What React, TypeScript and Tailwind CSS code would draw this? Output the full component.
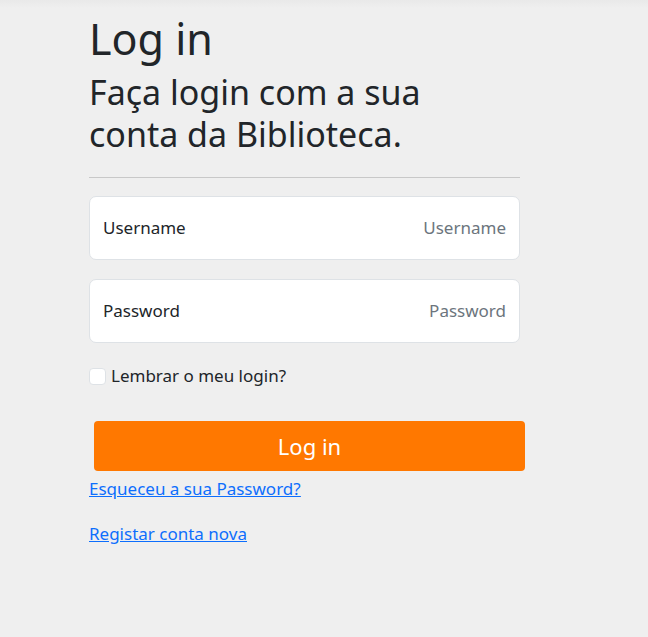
import React from 'react';

const font = { fontFamily: '"Noto Sans", "Open Sans", sans-serif' };

const Field: React.FC<{ label: string; type?: string }> = ({ label, type = 'text' }) => (
  <label className="flex items-center justify-between h-[64px] px-[13px] bg-white border border-[#dee2e6] rounded-[7px]">
    <span className="text-[17px] leading-[24px] text-[#212529]">{label}</span>
    <input
      type={type}
      placeholder={label}
      className="text-right text-[17px] bg-transparent outline-none placeholder:text-[#6c757d] w-[200px]"
    />
  </label>
);

export default function App() {
  return (
    <div className="min-h-[637px] bg-[#efefef] text-[#212529]" style={font}>
      <div className="h-[8px] bg-gradient-to-b from-[#e9e9e9] to-[#efefef]" />
      <div className="w-[431px] ml-[89px] pt-[3px]">
        <h1 className="text-[43px] leading-[56px]">Log in</h1>
        <h2 className="text-[34px] leading-[42px] mt-[4px]">
          Faça login com a sua
          <br />
          conta da Biblioteca.
        </h2>
        <hr className="mt-[22px] border-t border-[#c8c8c8]" />

        <form className="mt-[18px] flex flex-col gap-[19px]">
          <Field label="Username" />
          <Field label="Password" type="password" />
        </form>

        <div className="mt-[21px] flex items-center gap-[5px] h-[24px]">
          <span className="w-[17px] h-[17px] bg-white border border-[#dee2e6] rounded-[4px]" />
          <span className="text-[17px] leading-[24px]">Lembrar o meu login?</span>
        </div>

        <button className="mt-[33px] ml-[5px] w-[431px] h-[50px] rounded-[4px] bg-[#ff7800] text-white text-[22px]">
          Log in
        </button>

        <div className="mt-[6px] flex flex-col gap-[21px] text-[17px] leading-[24px] text-[#0d6efd] underline">
          <a href="#">Esqueceu a sua Password?</a>
          <a href="#">Registar conta nova</a>
        </div>
      </div>
    </div>
  );
}
